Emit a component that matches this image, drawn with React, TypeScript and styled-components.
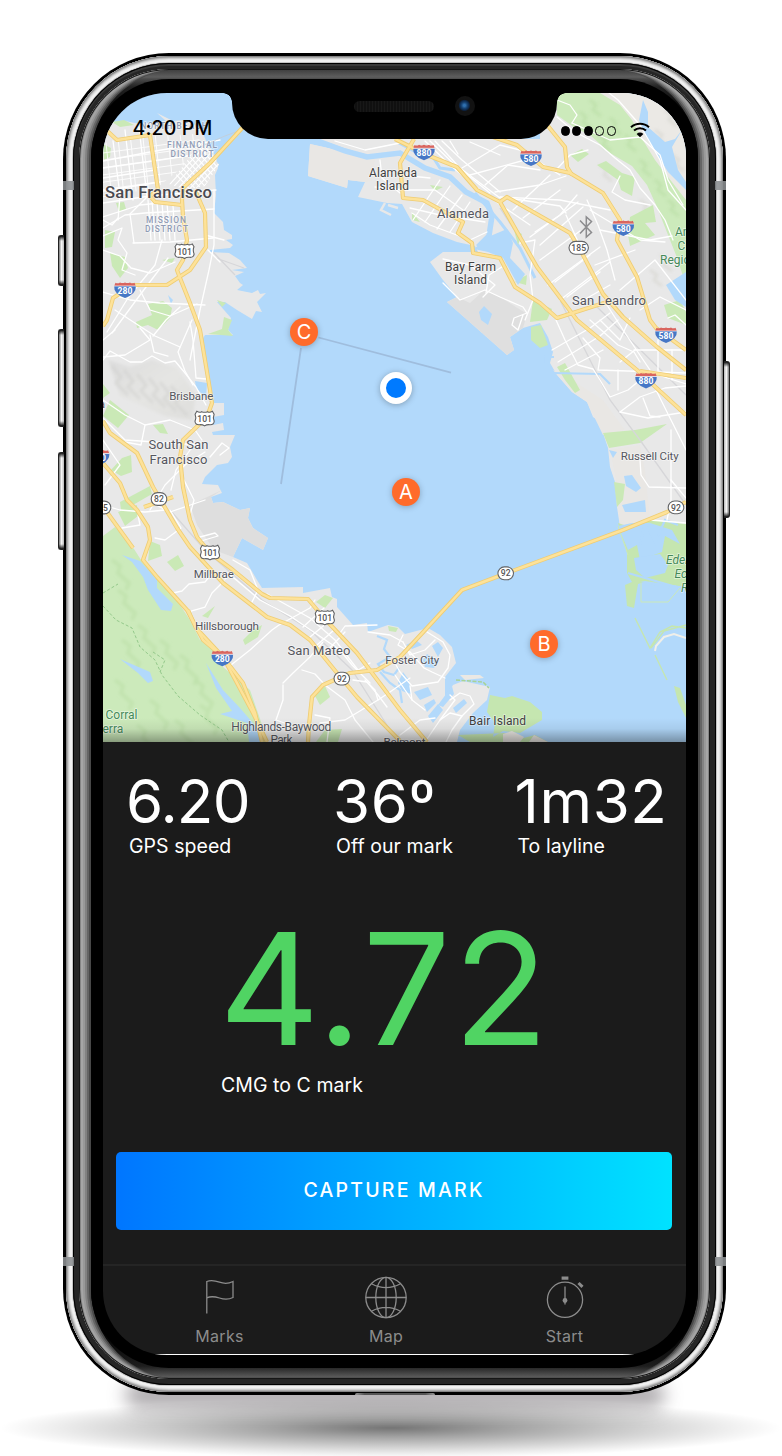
import React from "react";
import styled, { createGlobalStyle } from "styled-components";

const GlobalStyle = createGlobalStyle`
  * { box-sizing: border-box; }
  body { margin: 0; background: #fff; font-family: Inter, "Liberation Sans", sans-serif; }
`;

/* ---------- device ---------- */

const Stage = styled.main`
  position: relative;
  width: 782px;
  height: 1456px;
  padding: 53px 56px 0 63px;
  overflow: hidden;
  background: #fff;
`;

const GroundShadow = styled.div`
  position: absolute;
  left: 0;
  bottom: -2px;
  width: 782px;
  height: 60px;
  background: radial-gradient(ellipse 50% 50% at 50% 50%, rgba(0,0,0,.54), rgba(0,0,0,.36) 30%, rgba(0,0,0,.2) 60%, rgba(0,0,0,.07) 85%, transparent);
`;

const ContactShadow = styled.div`
  position: absolute;
  left: 125px;
  bottom: 48px;
  width: 540px;
  height: 26px;
  border-radius: 26px;
  background: rgba(60, 52, 60, .42);
  filter: blur(9px);
`;

const Shell = styled.div`
  position: relative;
  width: 663px;
  height: 1342px;
  padding: 3px;
  border-radius: 106px;
  background: #000;
`;

const SideKey = styled.span<{ $side: "left" | "right"; $top: number; $length: number }>`
  position: absolute;
  ${(p) => p.$side}: ${(p) => (p.$side === "left" ? -5 : -4)}px;
  top: ${(p) => p.$top}px;
  width: 6px;
  height: ${(p) => p.$length}px;
  border: 1px solid #222;
  border-${(p) => (p.$side === "left" ? "right" : "left")}: 0;
  border-radius: ${(p) => (p.$side === "left" ? "3px 0 0 3px" : "0 3px 3px 0")};
  background:
    linear-gradient(#111, transparent 5px, transparent calc(100% - 5px), #111),
    linear-gradient(${(p) => (p.$side === "left" ? "to right" : "to left")}, #777, #f4f4f4 50%, #bbb);
`;

const Antenna = styled.span<{ $side: "left" | "right"; $top: number }>`
  position: absolute;
  ${(p) => p.$side}: 0;
  top: ${(p) => p.$top}px;
  width: 11px;
  height: 9px;
  background: rgba(140, 143, 146, .88);
`;

const PortLip = styled.span`
  position: absolute;
  left: 292px;
  bottom: 0;
  width: 80px;
  height: 2px;
  border-radius: 3px 3px 0 0;
  background: linear-gradient(90deg, #999, #555 12%, #555 88%, #999);
`;

const Steel = styled.div`
  height: 100%;
  padding: 7px;
  border-radius: 103px;
  background: #c4c4c4;
  box-shadow:
    inset 0 0 0 1px #858585,
    inset 0 0 0 2px #acacac,
    inset 0 0 0 3px #cecece,
    inset 0 0 0 4px #e6e6e6,
    inset 0 0 0 6px #f1f1f1;
`;

const Gasket = styled.div`
  height: 100%;
  padding: 6px;
  border-radius: 96px;
  background: #262626;
  box-shadow: inset 0 0 0 1px #000, inset 0 2px 0 1px #3a3a3a;
`;

const Bezel = styled.div`
  height: 100%;
  padding: 10px 12px 11px;
  border-radius: 90px;
  background: linear-gradient(#3c3c3c, #5e5e5e 8px, #4a4a4a 10px, #222 18px, #000 50px, #000 calc(100% - 50px), #1d1d1d calc(100% - 13px), #5a5a5a calc(100% - 2px), #333);
  box-shadow:
    inset 0 0 0 1px #161616,
    inset 2px 0 0 0 #858585, inset -2px 0 0 0 #858585,
    inset 4px 0 0 0 #a6a6a6, inset -4px 0 0 0 #a6a6a6,
    inset 6px 0 0 0 #999, inset -6px 0 0 0 #999,
    inset 8px 0 0 0 #828282, inset -8px 0 0 0 #828282,
    inset 10px 0 0 0 #656565, inset -10px 0 0 0 #656565,
    inset 12px 0 0 0 #484848, inset -12px 0 0 0 #484848;
`;

const Glass = styled.div`
  height: 100%;
  padding: 14px 12px 12px;
  border-radius: 78px;
  background: #000;
`;

const Screen = styled.div`
  position: relative;
  display: flex;
  flex-direction: column;
  width: 583px;
  height: 1262px;
  border-radius: 64px;
  overflow: hidden;
  background: #1b1b1b;
`;

const Notch = styled.div`
  position: absolute;
  z-index: 3;
  top: -1px;
  left: 129px;
  width: 325px;
  height: 47px;
  border-radius: 0 0 36px 36px;
  background: #000;
  &::before, &::after {
    content: "";
    position: absolute;
    top: 0;
    width: 9px;
    height: 10px;
  }
  &::before { left: -9px; background: radial-gradient(circle at 0 100%, transparent 8.5px, #000 9px); }
  &::after { right: -9px; background: radial-gradient(circle at 100% 100%, transparent 8.5px, #000 9px); }
`;

const Speaker = styled.span`
  position: absolute;
  left: 122px;
  top: 9px;
  width: 80px;
  height: 11px;
  border-radius: 6px;
  background: repeating-linear-gradient(90deg, #181818 0 1px, #101010 1px 3px);
`;

const Camera = styled.span`
  position: absolute;
  left: 223px;
  top: 4px;
  width: 20px;
  height: 20px;
  border-radius: 50%;
  background: radial-gradient(circle at 47% 47%, #2f6faf 0 1px, #164273 3px, #0c2343 5px, #121212 6px);
`;

/* ---------- map ---------- */

const MapArea = styled.section`
  position: relative;
  flex: none;
  height: 649px;
  background: #b2d9fb;
`;

const MapCanvas = styled.svg`
  display: block;
  width: 583px;
  height: 649px;
  font-family: Roboto, sans-serif;
`;

const StatusBar = styled.div`
  position: absolute;
  z-index: 2;
  top: 24px;
  left: 30px;
  right: 34px;
  display: flex;
  align-items: flex-start;
  justify-content: space-between;
  color: #000;
`;

const Clock = styled.span`
  margin-left: -.5px;
  font-size: 19.5px;
  line-height: 22px;
  font-weight: 500;
  letter-spacing: .15px;
`;

const Signal = styled.div`
  display: flex;
  align-items: center;
  gap: 2.1px;
  padding-top: 6px;
`;

const SignalDot = styled.i<{ $on: boolean }>`
  width: 9.4px;
  height: 9.4px;
  border: 1px solid #000;
  border-radius: 50%;
  background: ${(p) => (p.$on ? "#000" : "transparent")};
`;

const WifiIcon = styled.svg`
  margin: -2px 0 0 10px;
`;

const Pin = styled.span<{ $x: number; $y: number }>`
  position: absolute;
  left: ${(p) => p.$x}px;
  top: ${(p) => p.$y}px;
  width: 28px;
  height: 28px;
  margin: -14px;
  display: flex;
  align-items: center;
  justify-content: center;
  border-radius: 50%;
  background: #ff6b2b;
  box-shadow: 0 1px 6px rgba(0, 0, 0, .25);
  color: #fff;
  font-size: 20px;
`;

const BoatDot = styled.span`
  position: absolute;
  left: 293px;
  top: 295px;
  width: 32px;
  height: 32px;
  margin: -16px;
  border: 6px solid #fff;
  border-radius: 50%;
  background: #007aff;
  box-shadow: 0 1px 6px rgba(0, 0, 0, .28);
`;

const MapFade = styled.div`
  position: absolute;
  left: 0;
  right: 0;
  bottom: 0;
  height: 24px;
  background: linear-gradient(transparent, rgba(0,0,0,.06) 45%, rgba(0, 0, 0, .33));
`;

const WHITE_ROADS = [
  "M103 161 L150 152 L220 140", "M103 168 L160 160 L213 152", "M103 178 L155 170", "M103 191 L160 182", "M103 203 L150 196 L216 190",
  "M103 217 L140 205 L160 203", "M113 141 L120 195 L118 220", "M125 130 L133 200", "M139 127 L147 197 L130 214 L134 243",
  "M103 228 L125 215 L145 213 L214 209", "M133 243 L170 242 L213 238", "M103 220 L112 225 L118 218", "M148 200 L151 240", "M152 200 L155 240",
  "M157 202 L160 240", "M162 203 L165 240", "M167 203 L170 240", "M173 205 L175 240", "M214 190 L214 245 L209 270 L200 310 L190 360",
  "M103 236 L122 228 L118 240 L127 253 L122 270 L135 275", "M103 250 L120 256 L131 268 L150 273 L175 262", "M205 235 L224 240", "M208 250 L220 262",
  "M103 292 L130 300 L160 303 L205 305", "M107 332 L128 298 L155 265 L162 240", "M112 333 L140 295 L168 258", "M115 310 L138 325 L155 336 L180 347",
  "M140 290 L150 310 L170 316 L197 304", "M153 336 L166 320 L180 307", "M103 340 L115 330", "M103 357 L125 355 L150 340 L140 328", "M150 335 L154 352 L168 356",
  "M103 360 L110 351 L130 362 L142 362 L152 356 L165 363 L175 361 L185 373 L196 387 L206 405", "M192 320 L178 352 L185 371 L193 385", "M190 322 L193 340 L196 378 L206 379",
  "M103 400 L125 415 L145 425 L170 420 L195 430 L202 440", "M145 425 L141 445 L125 442", "M103 418 L125 440 L200 445", "M200 442 L190 450 L176 470 L171 490",
  "M150 510 L165 485 L185 465 L205 452", "M158 506 L170 512 L205 500", "M184 480 L194 500 L190 515", "M210 457 L222 443 L229 448 L220 455", "M103 440 L120 465 L105 485",
  "M103 505 L120 510 L145 512 L165 510", "M122 528 L140 525 L138 515", "M170 510 L181 528 L165 540 L155 538", "M200 537 L215 533 L218 536 L201 541",
  "M233 560 L250 570 L258 590", "M173 593 L182 591 L189 584 L205 582 L214 571", "M191 611 L205 607 L212 593 L224 581", "M225 579 L236 571",
  "M228 573 L260 600 L290 616 L340 650 L352 665 L370 683", "M252 602 L257 592", "M267 594 L310 618 L335 640 L358 670", "M231 665 L250 650 L272 630 L279 625 L310 608 L315 600",
  "M303 627 L324 608", "M310 637 L328 622", "M317 645 L334 630", "M325 653 L345 632", "M350 675 L370 663", "M377 625 L345 626 L338 636", "M368 632 L390 635 L403 642",
  "M283 683 L293 673 L310 657 L323 642", "M283 685 L283 700 L276 720 L290 725", "M302 670 L315 674 L325 685 L345 700 L355 720 L373 742", "M320 723 L345 720 L378 700 L375 690 L365 680",
  "M353 680 L367 682 L378 695 L387 707", "M378 700 L390 692 L410 678", "M315 715 L330 718 L327 742",
  "M403 642 L410 655 L425 650 L435 640", "M427 632 L443 642 L450 655 L448 668 L438 682 L412 686 L400 672 L396 665", "M403 635 L398 645 L410 652 L424 668 L432 672 L445 678",
  "M410 686 L412 700 L425 710", "M450 700 L460 693 L470 696 L474 704 L462 716 L450 713 L440 720", "M425 742 L440 720 L455 700 L450 695", "M462 716 L452 730 L446 742",
  "M395 675 L405 690 L412 700", "M400 735 L420 720 L435 718",
  "M557 100 L570 105 L577 115 L572 123", "M572 123 L590 131 L610 140 L640 137 L660 155 L668 180 L683 205", "M609 93 L618 100 L640 125 L660 160 L668 190 L686 210",
  "M557 117 L575 132 L600 145 L615 158 L630 170 L640 188 L655 205 L665 220 L673 240", "M588 150 L570 155 L556 170", "M620 176 L612 192 L625 200 L650 205",
  "M425 141 L450 165 L480 190 L505 208 L530 225", "M430 141 L455 165 L490 193", "M435 141 L460 168 L500 198", "M442 141 L462 160 L500 192", "M450 141 L458 154",
  "M462 168 L500 145 L520 150 L560 175", "M470 175 L525 160", "M485 185 L508 165 L540 170", "M495 192 L540 185 L566 176", "M500 197 L560 200 L610 210", "M508 198 L560 206 L566 213",
  "M513 210 L550 175", "M523 218 L560 190", "M530 237 L578 202", "M540 245 L583 207", "M535 232 L560 215 L577 195", "M548 285 L600 247", "M560 300 L610 262", "M540 260 L580 231",
  "M555 282 L590 255", "M566 215 L580 246", "M587 200 L598 225 L607 250 L615 280", "M600 230 L650 240 L672 236", "M590 210 L615 225 L640 240 L665 242",
  "M620 290 L655 260 L686 300", "M595 265 L635 250", "M567 297 L600 272", "M575 305 L610 285", "M520 243 L535 240 L530 275 L533 300 L525 320",
  "M412 213 L430 225 L470 240 L487 232", "M413 220 L440 180", "M425 222 L450 186", "M437 229 L462 195", "M450 232 L470 202", "M410 208 L440 215 L485 222", "M400 190 L435 190 L470 215",
  "M380 160 L382 178 L400 193", "M375 187 L405 190", "M400 175 L430 178", "M335 141 L365 150 L400 143", "M470 142 L500 155",
  "M443 283 L460 300 L485 290 L500 297 L523 307 L527 313 L514 318 L512 325 L518 330 L523 315", "M443 259 L470 265 L495 285 L483 297", "M486 293 L489 275 L505 265",
  "M556 320 L565 340 L578 365 L593 369 L600 380 L610 397 L628 390 L640 380", "M552 350 L590 328 L610 313", "M558 362 L600 336 L618 320", "M565 370 L603 350",
  "M583 338 L600 358 L598 370 L686 373", "M590 320 L618 345 L634 352 L640 362", "M607 305 L623 330 L650 370", "M634 350 L686 350", "M618 370 L618 390", "M620 362 L635 350",
  "M600 320 L620 340 L630 318", "M658 340 L658 375 L686 384", "M672 350 L672 380", "M620 412 L640 397 L665 388 L686 386", "M620 412 L648 418 L686 412", "M643 398 L650 416 L660 417",
  "M656 390 L670 418 L686 450", "M640 310 L660 297 L686 310", "M668 318 L675 315 L686 325", "M640 460 L641 475 L649 487 L686 488", "M671 430 L671 500 L667 520", "M671 480 L686 498", "M650 520 L686 523",
];

const HIGHWAYS = [
  "M103 127 L117 140 L150 135 L158 190 L150 196 L155 202 L182 205",
  "M244 126 L210 163 L183 188 L182 200 L183 217 L187 240 L183 260 L177 270 L180 278 L190 303 L200 330 L210 390 L212 403 L207 417 L183 440 L180 457 L183 487 L190 520 L197 537 L210 553 L233 570 L262 594 L270 598 L308 599 L323 617 L357 653 L400 710 L427 742",
  "M195 190 L205 213 L206 247 L190 270 L167 285 L133 285 L113 298 L107 320 L103 326",
  "M103 421 L110 433 L137 453 L153 487 L177 528 L190 547 L223 583 L267 617 L290 625 L310 640 L337 673 L357 697 L400 741",
  "M103 463 L120 483 L127 500 L137 510 L148 527 L150 540 L143 560 L157 577 L187 610 L203 640 L223 657 L237 683 L253 713 L267 742",
  "M188 610 L196 628 L223 657 L243 683 L255 713 L262 742",
  "M104 508 L133 548",
  "M144 507 L173 497",
  "M308 742 L309 725 L312 697 L323 685 L350 673 L377 670 L400 657 L427 628 L462 590 L507 573 L623 530 L667 512 L686 502",
  "M493 137 L517 145 L543 167 L570 173 L603 193 L620 220 L617 240 L637 277 L650 320 L656 328 L686 350",
  "M548 126 L565 147 L567 167 L572 175",
  "M395 139 L427 155 L457 167 L477 190 L500 202 L537 267 L577 320 L637 370 L686 415",
  "M640 371 L686 378",
  "M500 202 L507 197 L570 233 L582 253 L603 294 L623 317 L657 347 L686 370",
  "M414 139 L400 163 L403 198 L423 200 L463 222 L458 233 L472 243 L473 253 L500 258 L515 287 L540 303 L557 318 L607 302",
];

const PARKS = [
  "M103 144 L111 148 L110 157 L104 160Z", "M105 230 L115 232 L112 247 L105 248Z", "M110 253 L125 257 L128 268 L120 278 L112 266Z", "M162 260 L175 258 L172 263Z",
  "M112 122 L124 120 L134 125 L120 127Z", "M116 203 L124 202 L126 209 L119 212Z",
  "M148 304 L163 301 L172 308 L170 318 L158 330 L148 325 L137 328 L136 322 L152 315Z", "M217 300 L226 303 L222 307Z", "M224 317 L232 320 L228 330 L233 336 L208 334 L222 329Z",
  "M103 384 L110 393 L103 398Z", "M110 400 L129 415 L118 428 L103 416Z", "M153 425 L163 424 L168 434 L160 433Z", "M122 458 L131 455 L132 472 L121 476 L111 470Z", "M120 502 L150 486 L152 494 L133 505 L137 509 L122 518Z",
  "M118 512 L137 505 L138 516 L125 526Z", "M150 541 L160 545 L162 556 L148 561Z", "M167 562 L178 555 L184 566 L175 571Z", "M202 616 L215 606 L208 618Z", "M243 640 L253 630 L262 625 L258 637 L245 645Z",
  "M316 602 L325 595 L333 598 L325 608Z", "M388 626 L398 628 L396 632 L389 631Z", "M315 696 L325 686 L330 697 L320 705Z", "M316 742 L325 730 L342 729 L338 742Z",
  "M597 165 L606 161 L622 173 L635 177 L632 196 L621 190 L618 180Z", "M570 155 L582 149 L589 154 L578 162Z", "M630 217 L653 205 L656 222 L645 223 L655 235 L630 246 L628 235Z",
  "M533 300 L552 309 L547 320 L530 322Z", "M531 327 L541 325 L548 345 L540 348 L531 340Z", "M557 367 L565 363 L580 390 L575 393 L565 380Z", "M603 433 L635 430 L667 424 L640 443 L609 448Z", "M614 482 L625 484 L623 500 L617 507Z",
  "M523 277 L527 275 L526 285 L515 282Z", "M430 185 L443 187 L435 191Z", "M412 212 L420 222 L412 220Z", "M514 230 L522 234 L518 245Z", "M664 305 L680 300 L686 312 L686 325 L668 318Z",
];

const WATER_BITS = [
  "M122 555 L140 561 L157 580 L157 588 L173 604 L171 611 L161 610 L148 590 L143 577 L132 562Z",
  "M206 663 L223 690 L240 708 L253 723 L263 742 L249 742 L247 723 L220 714 L232 711 L216 688Z",
  "M120 659 L150 672 L153 681 L148 683 L138 673Z", "M168 295 L173 300 L171 304Z",
  "M474 249 L488 237 L507 229 L513 243 L510 258 L525 274 L518 285 L503 258 L488 252Z",
  "M479 312 L484 306 L492 314 L488 325 L481 320Z", "M643 100 L648 112 L648 127 L665 142 L675 139 L682 130 L672 147 L678 170 L686 182 L686 190 L668 172 L656 153 L645 135 L639 120Z",
  "M666 285 L686 272 L686 307 L675 300Z", "M195 381 L207 383 L206 398 L196 388Z", "M609 450 L617 452 L613 458Z", "M624 476 L632 475 L641 488 L636 492 L626 486Z", "M622 505 L645 500 L646 512 L625 512Z",
  "M403 672 L409 680 L411 694 L402 691 L398 683Z", "M414 692 L428 687 L432 695 L420 700Z", "M423 660 L427 654 L439 661 L434 668 L425 667Z", "M406 645 L416 640 L422 645 L412 649Z", "M438 705 L452 686 L454 694 L443 707Z", "M428 716 L438 704 L443 710 L433 723Z",
  "M464 699 L467 703 L456 713 L453 708Z", "M432 646 L438 642 L443 648 L438 657Z", "M424 705 L434 699 L436 703 L427 712Z",
  "M618 526 L628 550 L637 545 L640 560 L662 552 L665 536 L680 544 L672 530 L650 523 L632 523Z", "M634 558 L660 554 L668 565 L665 573 L645 578 L636 570Z", "M640 582 L686 593 L686 587 L645 581Z",
];

interface Label { x: number; y: number; text: string; size: number; fill?: string; weight?: number; start?: boolean; italic?: boolean; width?: number }
const HOOD = "#8f9bb5";
const PARK = "#468a5a";
const LABELS: Label[] = [
  { x: 174, y: 128.5, text: "NORTH BEACH", size: 8.2, fill: HOOD, weight: 500, width: 67 },
  { x: 192, y: 148, text: "FINANCIAL", size: 8.4, fill: HOOD, weight: 500, width: 50 },
  { x: 192, y: 157.2, text: "DISTRICT", size: 8.4, fill: HOOD, weight: 500, width: 43 },
  { x: 158.5, y: 198, text: "San Francisco", size: 16.6, fill: "#4a4a50", weight: 500, width: 107 },
  { x: 166, y: 223, text: "MISSION", size: 8.4, fill: HOOD, weight: 500, width: 40 },
  { x: 166.5, y: 232.3, text: "DISTRICT", size: 8.4, fill: HOOD, weight: 500, width: 43 },
  { x: 393, y: 177, text: "Alameda", size: 12, fill: "#3f4040", width: 48 },
  { x: 392.5, y: 190.3, text: "Island", size: 12, fill: "#3f4040", width: 33 },
  { x: 463, y: 217.5, text: "Alameda", size: 13, width: 52 },
  { x: 470.5, y: 270.8, text: "Bay Farm", size: 12, fill: "#3f4040", width: 51 },
  { x: 470.5, y: 284.3, text: "Island", size: 12, fill: "#3f4040", width: 33 },
  { x: 609, y: 304.5, text: "San Leandro", size: 13, width: 74 },
  { x: 191.3, y: 400, text: "Brisbane", size: 11.5, width: 44 },
  { x: 178.5, y: 449.3, text: "South San", size: 13, width: 60 },
  { x: 178.5, y: 464, text: "Francisco", size: 13, width: 58 },
  { x: 649.7, y: 460.3, text: "Russell City", size: 11.5, width: 58 },
  { x: 213.8, y: 577.5, text: "Millbrae", size: 11.5, width: 40 },
  { x: 227, y: 630.3, text: "Hillsborough", size: 11.7, width: 64 },
  { x: 319, y: 654.7, text: "San Mateo", size: 13, width: 63 },
  { x: 412.3, y: 663.8, text: "Foster City", size: 11.5, width: 54 },
  { x: 281.3, y: 731.2, text: "Highlands-Baywood", size: 12, width: 100 },
  { x: 281.5, y: 743.8, text: "Park", size: 12, width: 22 },
  { x: 404.5, y: 746, text: "Belmont", size: 11.7, width: 42 },
  { x: 497.5, y: 725.3, text: "Bair Island", size: 12, fill: "#3f4040", width: 57 },
  { x: 105.5, y: 719, text: "Corral", size: 12, fill: PARK, start: true },
  { x: 102.5, y: 733, text: "erra", size: 12, fill: PARK, start: true },
  { x: 675, y: 236, text: "An", size: 12, fill: PARK, start: true },
  { x: 677.5, y: 249.5, text: "Ch", size: 12, fill: PARK, start: true },
  { x: 660, y: 263.5, text: "Regio", size: 12, fill: PARK, start: true },
  { x: 666, y: 564, text: "Eden", size: 12, fill: PARK, start: true, italic: true },
  { x: 674.5, y: 578, text: "Eco", size: 12, fill: PARK, start: true, italic: true },
  { x: 681, y: 592, text: "Re", size: 12, fill: PARK, start: true, italic: true },
  { x: 99, y: 408, text: "a", size: 11, start: true },
];

type Spot = [number, number, string];
const INTERSTATES: Spot[] = [[125, 290, "280"], [531, 158, "580"], [424, 152.3, "880"], [623.3, 228, "580"], [666, 335, "580"], [646, 380.5, "880"], [222.3, 658.3, "280"], [98.5, 457.5, "380"]];
const US_ROUTES: Spot[] = [[184.5, 251.3, "101"], [204.6, 418.7, "101"], [210, 552.7, "101"], [324.8, 617.7, "101"]];
const STATE_ROUTES: Spot[] = [[578.7, 247.8, "185"], [159, 499, "82"], [676, 507.4, "92"], [505.7, 573.3, "92"], [341.8, 678.6, "92"], [103, 507.5, "35"]];

function BayMap() {
  return (
    <MapCanvas viewBox="103 93 583 649">
      <defs>
        <clipPath id="soma"><path d="M169 184 L203 140 L219 165 L205 186 L186 190Z" /></clipPath>
        <clipPath id="north"><path d="M103 143 L116 142 L150 136 L197 134 L204 150 L158 187 L103 198Z" /></clipPath>
        <filter id="relief" x="-5%" y="-5%" width="110%" height="110%"><feGaussianBlur stdDeviation="1.6" /></filter>
        <linearGradient id="ridge" x1="0" y1="0" x2="1" y2="1">
          <stop offset="0" stopColor="#dcdcdc" /><stop offset=".5" stopColor="#e5e5e3" /><stop offset="1" stopColor="#dededc" />
        </linearGradient>
      </defs>

      {/* peninsula */}
      <path fill="#e8e8e8" d="M103 124 L112 122 L125 121 L140 124 L158 122 L166 121 L157 113 L173 121 L184 120 L192 123 L201 129 L208 145 L213 152 L217 160 L213 165 L218 168 L215 175 L216 195 L214 213 L223 222 L224 230 L232 235 L232 239 L226 240 L233 245 L230 248 L210 250 L210 252 L229 253 L240 260 L247 268 L232 270 L244 272 L235 276 L240 283 L243 285 L237 290 L252 293 L258 290 L260 294 L266 293 L257 302 L262 312 L256 311 L252 319 L237 310 L225 302 L217 302 L231 318 L228 330 L233 335 L205 335 L202 340 L205 363 L210 390 L213 403 L224 403 L224 415 L213 417 L213 425 L223 423 L224 430 L212 432 L213 435 L235 435 L230 447 L232 457 L228 463 L217 465 L205 477 L202 484 L218 485 L222 493 L211 497 L213 503 L223 502 L240 510 L250 508 L248 518 L253 528 L268 538 L263 550 L242 538 L233 557 L247 563 L257 580 L262 588 L303 587 L303 593 L330 588 L332 597 L337 599 L337 607 L353 625 L367 623 L368 632 L388 625 L398 627 L405 634 L428 628 L440 635 L452 647 L456 663 L445 677 L445 697 L453 685 L463 681 L490 687 L487 700 L473 713 L460 730 L457 742 L103 742Z" />
      <path fill="#dedede" d="M222 490 L211 497 L213 503 L223 502 L240 510 L250 508 L248 518 L253 528 L268 538 L263 550 L242 538 L233 557 L214 550 L197 525 L190 505Z" />
      <path fill="url(#ridge)" filter="url(#relief)" d="M108 360 L130 367 L152 360 L177 368 L196 395 L192 420 L165 416 L120 396Z" />
      <g filter="url(#relief)">
        {[112, 124, 137, 149, 160, 171].map((x, i) => (
          <path key={x} d={`M${x} ${366 + i * 4} l9 11 l-5 6 l12 12`} stroke="#d0d0cf" strokeWidth="3" fill="none" opacity=".6" />
        ))}
      </g>
      <path fill="#cceabb" d="M103 536 L115 527 L134 549 L143 563 L157 579 L178 602 L190 620 L200 640 L216 651 L223 667 L250 690 L268 742 L103 742Z" />
      <g filter="url(#relief)">
        {[[112, 560], [118, 590], [138, 625], [160, 640], [180, 655], [122, 640], [115, 680], [150, 700], [175, 720], [200, 705], [137, 725], [195, 680]].map(([x, y]) => (
          <path key={`${x}-${y}`} d={`M${x} ${y} l8 6 l-2 7 l11 10 l-3 7`} stroke="#bddfa8" strokeWidth="4" fill="none" opacity=".6" />
        ))}
      </g>
      <path d="M103 606 L116 620 L132 628 L140 647 L155 660 L162 675 L178 696 L200 715 L222 730 L229 742 M103 593 L118 584 M153 652 L165 660 L160 672" stroke="#94c98b" strokeWidth="1" strokeDasharray="3 2" fill="none" />

      {/* East Bay */}
      <path fill="#e8e8e8" d="M318 139 L367 156 L384 160 L310 144 L308 176 L347 188 L348 180 L365 182 L358 197 L387 203 L402 204 L412 222 L433 233 L457 242 L475 246 L478 252 L443 252 L430 262 L443 280 L457 297 L447 302 L507 355 L514 350 L510 337 L523 328 L540 323 L548 337 L553 352 L550 363 L557 375 L572 392 L587 402 L593 417 L602 423 L603 433 L608 448 L610 467 L615 482 L617 507 L620 527 L686 527 L686 93 L540 93 L540 139Z" />
      <path fill="#dfdfdf" d="M457 297 L447 302 L507 355 L514 350 L510 337 L523 328 L527 314 L500 297 L484 290 L470 303Z" />
      <path fill="#e9e7e4" d="M310 144 L375 159 L372 181 L365 182 L348 180 L347 188 L308 176Z M553 370 L572 380 L603 400 L625 430 L603 435 L587 402 L572 392Z M610 450 L640 445 L645 470 L650 520 L620 525 L616 480Z" />
      <path d="M385 203 l-4 7 l10 5 M388 205 l10 3" stroke="#e8e8e8" strokeWidth="2.5" fill="none" />
      <path d="M318 141 L345 151 L367 157 L400 153 L425 168 L450 177 L466 192 L487 203 L492 216 L489 236 L478 247" stroke="#b2d9fb" strokeWidth="5.5" fill="none" />
      <path d="M399 143 L418 153 L431 154 L440 168 L455 170 M475 193 L500 222 L520 248 L535 278" stroke="#b2d9fb" strokeWidth="3" fill="none" />
      <path fill="#ebe9e5" d="M603 93 L686 93 L686 215 L640 150Z" />
      <path fill="#cceabb" d="M557 93 L600 93 L620 105 L632 120 L641 137 L655 160 L668 177 L686 200 L686 285 L676 255 L670 240 L657 207 L647 185 L632 166 L610 153 L590 135 L575 128 L557 115Z" />
      <g filter="url(#relief)" fill="none" strokeWidth="3" opacity=".7">
        {[[590, 100], [610, 118], [625, 135], [640, 160], [655, 180], [668, 200], [580, 112], [600, 135]].map(([x, y]) => (
          <path key={`${x}-${y}`} d={`M${x} ${y} l6 5 l-3 5 l8 6`} stroke="#bcdfa8" />
        ))}
        {[[600, 165], [640, 200], [660, 255], [650, 270], [665, 110], [655, 130], [672, 155]].map(([x, y]) => (
          <path key={`${x}-${y}`} d={`M${x} ${y} l7 5 l-3 5 l8 6`} stroke="#d9d8d3" />
        ))}
      </g>

      {/* salt marsh and islands */}
      <path fill="#c5e6b0" d="M618 523 L630 527 L650 520 L686 524 L686 587 L645 582 L638 584 L634 608 L627 606 L625 585 L632 582 L627 573 L627 552Z" />
      <path d="M635 618 L650 648 L660 632 L672 626 L686 628 M651 648 L664 631 L686 625 M655 655 L667 680" stroke="#c5e6b0" strokeWidth="1.4" fill="none" />
      <path d="M655 651 L656 646 L664 637 L674 634 L686 638" stroke="#f0efe9" strokeWidth="2" fill="none" />
      <path fill="#c5e6b0" d="M674 686 L680 688 L686 705 L686 718 L678 702Z M490 695 L505 698 L512 696 L530 702 L542 712 L542 720 L520 733 L503 731 L493 737 L495 723 L487 712Z M458 735 L470 742 L548 742 L535 735 L520 739 L505 733Z" />
      <path fill="#ebe8e4" d="M503 734 L512 731 L524 737 L520 742 L503 742Z M529 742 L534 735 L548 742Z M460 675 L480 675 L484 678 L465 680Z" />
      <path d="M456 680 L483 682 L489 688" stroke="#a8d396" strokeWidth="1.5" strokeDasharray="4 1.5" fill="none" />
      {PARKS.map((d) => <path key={d} d={d} fill="#cae9b6" />)}
      {WATER_BITS.map((d) => <path key={d} d={d} fill="#b2d9fb" />)}
      <path d="M377 636 L387 640 L384 649 L390 657 L378 664 L384 672 L394 675 L399 668 M380 672 L390 683 L400 690 L402 703 M546 355 L546 363 M545 357 L554 357 M553 373 L600 374 L610 384 M628 573 L686 590 M640 545 L645 523 L655 543 L665 520 L678 525" stroke="#b2d9fb" strokeWidth="2.2" fill="none" />
      <path d="M628 555 L618 526 M641 583 L641 602 L668 602 L680 588" stroke="#cbe9b9" strokeWidth="1" fill="none" />

      {/* rail lines and streets */}
      <path d="M500 208 L560 300 L610 400 L640 440 L686 505 M590 300 L686 395 M170 510 L205 550 L262 600 L310 630 L352 670 L390 730 M213 252 L235 275 M216 258 L244 268" stroke="#d6d6d9" strokeWidth="1.3" fill="none" />
      <g stroke="#fff" strokeWidth="1.3" fill="none" strokeLinejoin="round" strokeLinecap="round">
        {WHITE_ROADS.map((d) => <path key={d} d={d} />)}
      </g>
      <g clipPath="url(#north)" stroke="#fff" strokeWidth="1" opacity=".85">
        {Array.from({ length: 8 }, (_, i) => <path key={`h${i}`} d={`M103 ${153 + i * 7.3} L205 ${139 + i * 7.3}`} />)}
        {Array.from({ length: 8 }, (_, i) => <path key={`v${i}`} d={`M${105 + i * 12.5} 133 L${112 + i * 12.5} 200`} />)}
      </g>
      <g clipPath="url(#soma)">
        <rect x="160" y="135" width="62" height="60" fill="#e8e8e8" />
        <g stroke="#fff" strokeWidth="1.1">
          {Array.from({ length: 13 }, (_, i) => <path key={`a${i}`} d={`M${130 + i * 6} 195 L${185 + i * 6} 135`} />)}
          {Array.from({ length: 13 }, (_, i) => <path key={`b${i}`} d={`M${140 + i * 6} 135 L${195 + i * 6} 195`} />)}
        </g>
      </g>
      <path d="M205 145 Q225 135 242 130" stroke="#c2cfdb" strokeWidth="1" fill="none" />

      {/* highways */}
      <g fill="none" strokeLinejoin="round">
        {HIGHWAYS.map((d) => <path key={d} d={d} stroke="#efcd74" strokeWidth="4.2" />)}
        {HIGHWAYS.map((d) => <path key={d} d={d} stroke="#fde299" strokeWidth="2.5" />)}
      </g>

      {/* place names */}
      {LABELS.map((l) => (
        <text key={`${l.text}${l.y}`} x={l.x} y={l.y} fontSize={l.size} fill={l.fill ?? "#55565e"} fontWeight={l.weight ?? 400}
          fontStyle={l.italic ? "italic" : "normal"} textAnchor={l.start ? "start" : "middle"} textLength={l.width}
          stroke="#fff" strokeOpacity=".55" strokeWidth="1.6" strokeLinejoin="round" paintOrder="stroke">{l.text}</text>
      ))}

      {/* route shields */}
      {INTERSTATES.map(([x, y, n]) => (
        <g key={`${x}${y}`} transform={`translate(${x} ${y})`}>
          <path d="M-9.5 -7.2 Q-7 -6 -5 -7.6 Q-2.5 -6.2 0 -7.6 Q2.5 -6.2 5 -7.6 Q7 -6 9.5 -7.2 L10.8 -3.9 L-10.8 -3.9Z" fill="#d9655f" />
          <path d="M-10.8 -3.9 L10.8 -3.9 Q11.6 4 0 8 Q-11.6 4 -10.8 -3.9Z" fill="#4677c6" />
          <path d="M-11 -4 H11" stroke="#fff" strokeWidth=".7" />
          <text y="3.6" textAnchor="middle" fontSize="8.6" fontWeight="700" fill="#fff">{n}</text>
        </g>
      ))}
      {US_ROUTES.map(([x, y, n]) => (
        <g key={`${x}${y}`} transform={`translate(${x} ${y})`}>
          <path d="M-7.8 -7.4 Q-5 -5.6 -3 -7 Q0 -5.8 3 -7 Q5 -5.6 7.8 -7.4 L9.5 -4.5 Q8 -1 9.6 2.6 Q9.4 6.4 5 6 Q2 5.8 0 7.2 Q-2 5.8 -5 6 Q-9.4 6.4 -9.6 2.6 Q-8 -1 -9.5 -4.5Z" fill="#fff" stroke="#5f6062" strokeWidth="1.1" />
          <text y="3.2" textAnchor="middle" fontSize="8.6" fontWeight="500" fill="#555">{n}</text>
        </g>
      ))}
      {STATE_ROUTES.map(([x, y, n]) => {
        const half = n.length === 3 ? 9.7 : 7.8;
        return (
          <g key={`${x}${y}`} transform={`translate(${x} ${y})`}>
            <rect x={-half} y="-6.4" width={half * 2} height="12.8" rx="6.4" fill="#fff" stroke="#636466" strokeWidth="1.1" />
            <text y="3.1" textAnchor="middle" fontSize="8.6" fontWeight="500" fill="#555">{n}</text>
          </g>
        );
      })}

      {/* laylines and bluetooth status */}
      <path d="M318.5 337.5 L451 372.7 M301 348 L281 484" stroke="#9fbddd" strokeWidth="1.8" fill="none" />
      <path d="M580 220.5 L591.5 232.5 L586.3 237 L586.3 217 L591.5 221.5 L580 233.5" stroke="#8c8c8e" strokeWidth="1.5" fill="none" />
    </MapCanvas>
  );
}

/* ---------- readouts ---------- */

const Metrics = styled.section`
  display: grid;
  grid-template-columns: 207px 181.5px 1fr;
  padding: 27px 0 0 23px;
  color: #fff;
`;

const MetricValue = styled.div<{ $tracking: number }>`
  height: 64px;
  font-size: 60px;
  line-height: 64px;
  font-weight: 400;
  letter-spacing: ${(p) => p.$tracking}px;
  white-space: nowrap;
`;

const Caption = styled.div`
  padding-left: 3px;
  font-size: 19.5px;
  line-height: 27px;
  letter-spacing: .05px;
  white-space: nowrap;
`;

const Headline = styled.section`
  padding: 37px 0 0 115px;
  color: #fff;
`;

const HeadlineValue = styled.div`
  height: 175px;
  margin-left: 1px;
  font-size: 156px;
  line-height: 184px;
  color: #50d463;
  letter-spacing: 2.6px;
`;

const CaptureButton = styled.button`
  flex: none;
  width: 556px;
  height: 78px;
  margin: 53px 0 0 13px;
  padding: 0 0 2px;
  border: 0;
  border-radius: 5px;
  background: linear-gradient(90deg, #0076ff, #00e2ff);
  color: #fff;
  font-family: inherit;
  font-size: 19.5px;
  font-weight: 500;
  letter-spacing: 2.2px;
`;

const TabBar = styled.nav`
  display: grid;
  grid-template-columns: 167px 166px 191px;
  margin-top: auto;
  height: 91px;
  padding: 10px 0 0 33px;
  border-top: 2px solid #252525;
  border-bottom: 1px solid #fff;
  color: #8c8c8c;
`;

const Tab = styled.a`
  display: flex;
  flex-direction: column;
  align-items: center;
  font-size: 16px;
  line-height: 20px;
  letter-spacing: .3px;
  svg { flex: none; margin-bottom: 6px; }
`;

const iconProps = { width: 44, height: 44, viewBox: "0 0 44 44", fill: "none", stroke: "currentColor", strokeWidth: 1.3 };

const FlagIcon = () => (
  <svg {...iconProps}>
    <path d="M8.8 37.5 V5.5 C13 3.8 17 4.6 21.5 6.2 C26 7.8 30 8 35 5.5 V21.5 C30 24 26 23.5 21.5 22 C17 20.6 13 20 8.8 21.8" />
  </svg>
);

const GlobeIcon = () => (
  <svg {...iconProps}>
    <circle cx="22" cy="21.5" r="20.2" />
    <ellipse cx="22" cy="21.5" rx="10.2" ry="20.2" />
    <path d="M22 1.3 V41.7 M1.8 21.5 H42.2 M7.5 7.8 Q22 15.5 36.5 7.8 M7.5 35.2 Q22 27.5 36.5 35.2" />
  </svg>
);

const TimerIcon = () => (
  <svg {...iconProps}>
    <circle cx="22" cy="23.8" r="17.6" />
    <path d="M18.6 2.2 H25.4" strokeWidth="3.2" />
    <path d="M22 10.5 V28.5" />
    <circle cx="22" cy="24.5" r="2.4" fill="currentColor" stroke="none" />
    <path d="M35.5 7 L39.5 10.8" strokeWidth="3" />
  </svg>
);

const metrics = [
  { value: "6.20", label: "GPS speed", tracking: -0.8 },
  { value: "36º", label: "Off our mark", tracking: 0.6 },
  { value: "1m32", label: "To layline", tracking: 0.6 },
];

const marks = [
  { name: "C", x: 201, y: 239 },
  { name: "A", x: 303, y: 399 },
  { name: "B", x: 441, y: 551 },
];

const tabs = [
  { label: "Marks", Icon: FlagIcon },
  { label: "Map", Icon: GlobeIcon },
  { label: "Start", Icon: TimerIcon },
];

export default function App() {
  return (
    <Stage>
      <GlobalStyle />
      <GroundShadow />
      <ContactShadow />
      <Shell>
        <SideKey $side="left" $top={182} $length={51} />
        <SideKey $side="left" $top={276} $length={98} />
        <SideKey $side="left" $top={399} $length={98} />
        <SideKey $side="right" $top={308} $length={157} />
        <PortLip />
        <Steel>
          <Gasket>
            <Bezel>
              <Glass>
                <Screen>
                  <Notch><Speaker /><Camera /></Notch>
                  <MapArea>
                    <BayMap />
                    {marks.map((m) => <Pin key={m.name} $x={m.x} $y={m.y}>{m.name}</Pin>)}
                    <BoatDot />
                    <MapFade />
                    <StatusBar>
                      <Clock>4:20 PM</Clock>
                      <Signal>
                        {[true, true, true, false, false].map((on, i) => <SignalDot key={i} $on={on} />)}
                        <WifiIcon width="24" height="18" viewBox="0 0 24 18">
                          <path d="M3 6.2 A13.5 13.5 0 0 1 21 6.2 M6 9.5 A9 9 0 0 1 18 9.5" fill="none" stroke="#000" strokeWidth="2" />
                          <path d="M8.6 12.9 A5.4 5.4 0 0 1 15.4 12.9 L12 16.3Z" fill="#000" />
                        </WifiIcon>
                      </Signal>
                    </StatusBar>
                  </MapArea>
                  <Metrics>
                    {metrics.map((m) => (
                      <div key={m.label}>
                        <MetricValue $tracking={m.tracking}>{m.value}</MetricValue>
                        <Caption>{m.label}</Caption>
                      </div>
                    ))}
                  </Metrics>
                  <Headline>
                    <HeadlineValue>4.72</HeadlineValue>
                    <Caption>CMG to C mark</Caption>
                  </Headline>
                  <CaptureButton>CAPTURE MARK</CaptureButton>
                  <TabBar>
                    {tabs.map(({ label, Icon }) => <Tab key={label}><Icon />{label}</Tab>)}
                  </TabBar>
                </Screen>
              </Glass>
            </Bezel>
          </Gasket>
        </Steel>
        <Antenna $side="left" $top={128} />
        <Antenna $side="left" $top={1204} />
        <Antenna $side="right" $top={128} />
        <Antenna $side="right" $top={1204} />
      </Shell>
    </Stage>
  );
}
